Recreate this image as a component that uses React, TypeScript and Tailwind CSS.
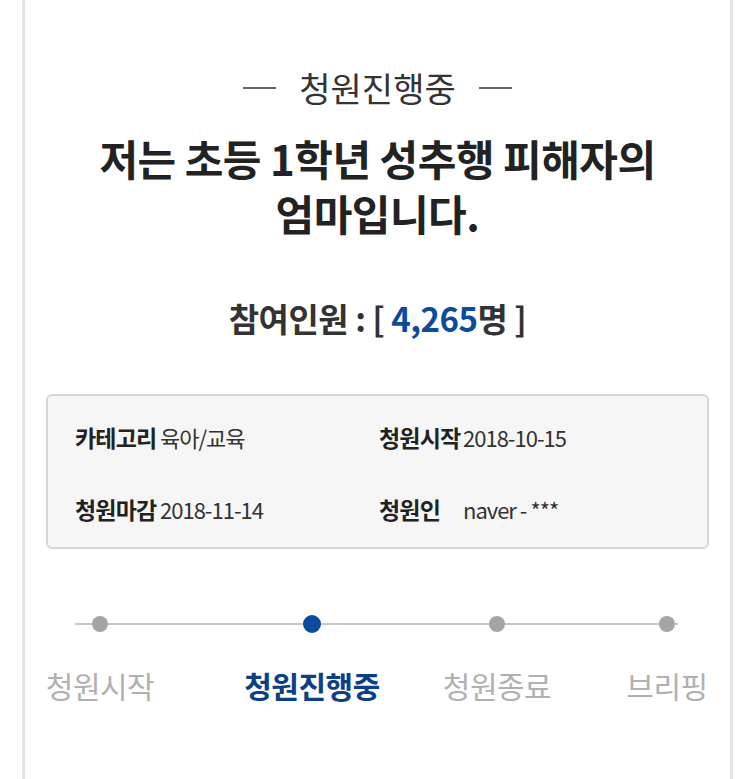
const steps = [
  { label: '청원시작', active: false, ml: 'ml-0' },
  { label: '청원진행중', active: true, ml: 'ml-[92px]' },
  { label: '청원종료', active: false, ml: 'ml-[65px]' },
  { label: '브리핑', active: false, ml: 'ml-[50px]' },
];

export default function App() {
  return (
    <div
      className="min-h-[779px] bg-white"
      style={{ fontFamily: '"Noto Sans CJK KR", "Noto Sans", sans-serif' }}
    >
      <div className="ml-[22px] w-[711px] min-h-[779px] border-x-[3px] border-[#e3e3e3] pt-[68px]">
        <div className="flex items-center justify-center gap-[23px] h-[40px]">
          <span className="w-[33px] h-[2px] bg-[#666]" />
          <span className="text-[34px] leading-[40px] text-[#333] font-normal">청원진행중</span>
          <span className="w-[33px] h-[2px] bg-[#666]" />
        </div>

        <h1 className="mt-[22px] text-center text-[42px] leading-[55px] font-bold text-[#222] tracking-[-0.5px]">
          저는 초등 1학년 성추행 피해자의
          <br />
          엄마입니다.
        </h1>

        <p className="mt-[58px] text-center text-[33px] leading-[40px] font-bold text-[#333] tracking-[-0.5px]">
          참여인원 : [ <span className="text-[#0b4a9c]">4,265</span>명 ]
        </p>

        <div className="mt-[56px] mx-[21px] h-[155px] rounded-[6px] border-2 border-[#d6d6d6] bg-[#f6f6f6] pl-[27px] pt-[26px]">
          <div className="grid grid-cols-[304px_1fr] gap-y-[42px] leading-[30px] text-[#333]">
            <div className="flex items-baseline">
              <span className="w-[85px] text-[23px] tracking-[-0.8px] font-bold text-[#222]">카테고리</span>
              <span className="text-[22px] tracking-[-1px]">육아/교육</span>
            </div>
            <div className="flex items-baseline">
              <span className="w-[84px] text-[23px] tracking-[-0.8px] font-bold text-[#222]">청원시작</span>
              <span className="text-[22px] tracking-[-1px]">2018-10-15</span>
            </div>
            <div className="flex items-baseline">
              <span className="w-[85px] text-[23px] tracking-[-0.8px] font-bold text-[#222]">청원마감</span>
              <span className="text-[22px] tracking-[-1px]">2018-11-14</span>
            </div>
            <div className="flex items-baseline">
              <span className="w-[84px] text-[23px] tracking-[-0.8px] font-bold text-[#222]">청원인</span>
              <span className="text-[22px] tracking-[-1px]">naver - ***</span>
            </div>
          </div>
        </div>

        <div className="relative mt-[66px]">
          <div className="absolute left-[50px] top-[8px] w-[603px] h-[2px] bg-[#c8c8c8]" />
          <div className="relative flex pl-[15px]">
            {steps.map((s) => (
              <div key={s.label} className={`flex flex-col items-center w-[120px] ${s.ml}`}>
                {s.active ? (
                  <span className="w-[18px] h-[18px] rounded-full bg-[#0b4a9c]" />
                ) : (
                  <span className="mt-[1px] mb-[1px] w-[16px] h-[16px] rounded-full bg-[#a5a5a5]" />
                )}
                <span
                  className={`mt-[32px] whitespace-nowrap text-[30px] leading-[40px] tracking-[-0.5px] ${
                    s.active ? 'font-bold text-[#0b3f86]' : 'font-normal text-[#b0b0b0]'
                  }`}
                >
                  {s.label}
                </span>
              </div>
            ))}
          </div>
        </div>
      </div>
    </div>
  );
}
